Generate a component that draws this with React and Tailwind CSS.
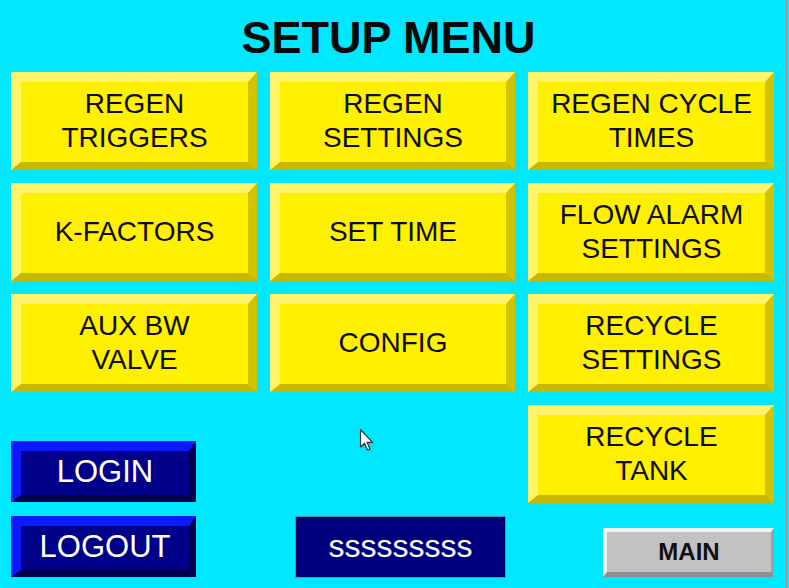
import React from "react";

const Yel = ({ children, className = "" }) => (
  <div
    className={`flex items-center justify-center text-center h-[98px] pb-[3px] border-t-[10px] border-l-[10px] border-r-[9px] border-b-[8px] border-t-[#fff46a] border-l-[#fff46a] border-r-[#d2c300] border-b-[#c9b800] bg-[#fff000] text-[28px] leading-[34px] text-[#0d0d0d]  ${className}`}
  >
    <div>{children}</div>
  </div>
);

const Blue = ({ children }) => (
  <div className="flex items-center justify-center h-[61px] w-[185px] pb-[3px] border-t-[10px] border-l-[10px] border-r-[7px] border-b-[7px] border-t-[#0c18ff] border-l-[#0c18ff] border-r-[#00004c] border-b-[#00004c] bg-[#000088] text-white text-[31px] leading-none">
    {children}
  </div>
);

export default function App() {
  return (
    <div className="w-[789px] h-[588px] bg-[#00e8ff] overflow-hidden" style={{ fontFamily: '"Liberation Sans", Arial, sans-serif' }}>
      <div className="relative w-[787px] h-[588px] border-r border-[#a88888] pl-[11px]">
        <div className="h-[72px] pt-[16px] pr-[20px] text-center text-[45px] leading-[44px] font-bold text-[#0a0a0a]">
          SETUP MENU
        </div>
        <div className="grid grid-cols-[246px_245px_246px] gap-x-[13px] gap-y-[13px]">
          <Yel>REGEN<br />TRIGGERS</Yel>
          <Yel>REGEN<br />SETTINGS</Yel>
          <Yel>REGEN CYCLE<br />TIMES</Yel>
          <Yel>K-FACTORS</Yel>
          <Yel>SET TIME</Yel>
          <Yel>FLOW ALARM<br />SETTINGS</Yel>
          <Yel>AUX BW<br />VALVE</Yel>
          <Yel>CONFIG</Yel>
          <Yel>RECYCLE<br />SETTINGS</Yel>
        </div>
        <div className="flex mt-[13px] h-[172px]">
          <div className="flex flex-col justify-end gap-[14px] w-[185px]">
            <Blue>LOGIN</Blue>
            <Blue>LOGOUT</Blue>
          </div>
          <div className="self-end ml-[100px] w-[209px] h-[60px] flex items-center justify-center bg-[#00007e] border-2 border-[#00005a] shadow-[0_0_0_1px_#2a9fc0] text-white text-[32px] leading-none pb-[2px]">
            sssssssss
          </div>
          <div className="ml-[23px] w-[246px] flex flex-col">
            <Yel>RECYCLE<br />TANK</Yel>
            <div className="mt-auto self-end w-[171px] h-[49px] flex items-center justify-center bg-[#c2c2c2] border-t-[4px] border-l-[4px] border-r-[3px] border-b-[5px] border-t-[#f2f2f2] border-l-[#f2f2f2] border-r-[#a0a0a0] border-b-[#8e8e8e] text-[24px] font-bold text-[#111] leading-none">
              MAIN
            </div>
          </div>
        </div>
        <svg className="absolute left-[359px] top-[428px]" width="17" height="26" viewBox="0 0 17 26">
          <path d="M2.5 2.5 L2.5 20 L6.5 16.2 L9.5 23 L12 22 L9 15.3 L14.5 15.3 Z" fill="#777" opacity="0.35" transform="translate(1 1)" />
          <path d="M1.5 1.5 L1.5 19 L5.5 15.2 L8.5 22 L11 21 L8 14.3 L13.5 14.3 Z" fill="#ffffff" stroke="#333" strokeWidth="1.2" strokeLinejoin="round" />
        </svg>
      </div>
    </div>
  );
}
